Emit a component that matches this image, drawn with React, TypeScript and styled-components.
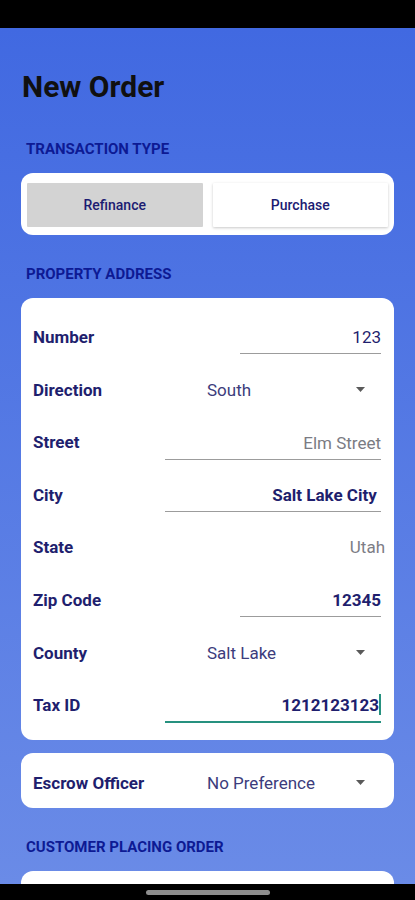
import React from "react";
import styled, { createGlobalStyle } from "styled-components";

const Global = createGlobalStyle`
  html, body { margin: 0; padding: 0; }
  body { font-family: Roboto, "Noto Sans", "Liberation Sans", sans-serif; background: #000; }
  * { box-sizing: border-box; }
`;

const Screen = styled.div`
  width: 415px;
  height: 900px;
  display: flex;
  flex-direction: column;
  overflow: hidden;
  background: #000;
`;

const StatusBar = styled.div`
  height: 28px;
  flex: none;
  background: #000;
`;

const Content = styled.div`
  flex: 1;
  overflow: hidden;
  background: linear-gradient(180deg, #4169e1 0%, #6a8be7 100%);
  padding: 41px 21px 0;
  display: flex;
  flex-direction: column;
`;

const NavBar = styled.div`
  height: 16px;
  flex: none;
  background: #000;
  display: flex;
  justify-content: center;
  padding-top: 6px;
`;

const NavPill = styled.div`
  width: 124px;
  height: 5px;
  border-radius: 3px;
  background: #8e8e8e;
`;

const Title = styled.h1`
  margin: 0 0 0 1px;
  font-size: 30px;
  line-height: 36px;
  font-weight: 700;
  color: #101010;
`;

const SectionHeader = styled.div<{ $top: number }>`
  margin: ${(p) => p.$top}px 0 15px 5px;
  font-size: 15px;
  line-height: 18px;
  font-weight: 700;
  color: #0d1a94;
`;

const Card = styled.div`
  background: #fff;
  border-radius: 12px;
  flex: none;
`;

const ToggleCard = styled(Card)`
  display: flex;
  gap: 10px;
  padding: 10px 6px 8px;
`;

const ToggleButton = styled.button<{ $selected?: boolean }>`
  flex: 1;
  height: 44px;
  border: none;
  border-radius: 1px;
  background: ${(p) => (p.$selected ? "#d3d3d3" : "#fff")};
  box-shadow: ${(p) => (p.$selected ? "none" : "0 1px 3px rgba(0,0,0,0.22)")};
  font-family: inherit;
  font-size: 14px;
  font-weight: 500;
  color: #1c1c72;
`;

const FormCard = styled(Card)`
  padding: 16.7px 13px 4.7px 12px;
  display: flex;
  flex-direction: column;
`;

const EscrowCard = styled(Card)`
  margin-top: 13px;
  padding: 4.5px 13px 0 12px;
`;

const Row = styled.div<{ $h?: number }>`
  height: ${(p) => p.$h ?? 52.57}px;
  display: flex;
  align-items: center;
`;

const Label = styled.div`
  flex: none;
  font-size: 17px;
  line-height: 20px;
  font-weight: 700;
  color: #1f1f6e;
  padding-bottom: 7.5px;
`;

const PlainLabel = styled(Label)`
  padding-bottom: 0;
`;

const Field = styled.div<{ $w: number; $focus?: boolean; $tone?: string; $bold?: boolean }>`
  margin-left: auto;
  width: ${(p) => p.$w}px;
  display: flex;
  justify-content: flex-end;
  align-items: center;
  font-size: 17px;
  line-height: 20px;
  font-weight: ${(p) => (p.$bold ? 700 : 400)};
  color: ${(p) => p.$tone ?? "#1f1f6e"};
  padding-bottom: 6px;
  border-bottom: ${(p) => (p.$focus ? "2px solid #26917f" : "1.5px solid #9c9c9c")};
`;

const Cursor = styled.span`
  display: inline-block;
  width: 2px;
  height: 21px;
  background: #26917f;
`;

const StaticValue = styled.div`
  margin-left: auto;
  margin-right: -4px;
  font-size: 17px;
  line-height: 20px;
  color: #7d7d85;
  padding-bottom: 7.5px;
`;

const Select = styled.div<{ $plain?: boolean }>`
  margin-left: auto;
  width: 174px;
  display: flex;
  align-items: center;
  justify-content: space-between;
  font-size: 17px;
  line-height: 20px;
  color: #3c3c7c;
  padding-right: 16px;
  padding-bottom: ${(p) => (p.$plain ? 0 : 7.5)}px;
`;

const Arrow = () => (
  <svg width="9" height="5" viewBox="0 0 9 5">
    <path d="M0 0H9L4.5 5Z" fill="#5a5a5a" />
  </svg>
);

const CustomerCard = styled(Card)`
  height: 80px;
`;

export default function App() {
  return (
    <>
      <Global />
      <Screen>
        <StatusBar />
        <Content>
          <Title>New Order</Title>
          <SectionHeader $top={34.5}>TRANSACTION TYPE</SectionHeader>
          <ToggleCard>
            <ToggleButton $selected>Refinance</ToggleButton>
            <ToggleButton>Purchase</ToggleButton>
          </ToggleCard>
          <SectionHeader $top={30.5}>PROPERTY ADDRESS</SectionHeader>
          <FormCard>
            <Row>
              <Label>Number</Label>
              <Field $w={141}>123</Field>
            </Row>
            <Row>
              <Label>Direction</Label>
              <Select>
                <span>South</span>
                <Arrow />
              </Select>
            </Row>
            <Row>
              <Label>Street</Label>
              <Field $w={216} $tone="#7a7b83">Elm Street</Field>
            </Row>
            <Row>
              <Label>City</Label>
              <Field $w={216} $bold>
                Salt Lake City&nbsp;
              </Field>
            </Row>
            <Row>
              <Label>State</Label>
              <StaticValue>Utah</StaticValue>
            </Row>
            <Row>
              <Label>Zip Code</Label>
              <Field $w={141} $bold>12345</Field>
            </Row>
            <Row>
              <Label>County</Label>
              <Select>
                <span>Salt Lake</span>
                <Arrow />
              </Select>
            </Row>
            <Row>
              <Label>Tax ID</Label>
              <Field $w={216} $bold $focus>
                1212123123
                <Cursor />
              </Field>
            </Row>
          </FormCard>
          <EscrowCard>
            <Row $h={50.5}>
              <PlainLabel>Escrow Officer</PlainLabel>
              <Select $plain>
                <span>No Preference</span>
                <Arrow />
              </Select>
            </Row>
          </EscrowCard>
          <SectionHeader $top={30}>CUSTOMER PLACING ORDER</SectionHeader>
          <CustomerCard />
        </Content>
        <NavBar>
          <NavPill />
        </NavBar>
      </Screen>
    </>
  );
}
